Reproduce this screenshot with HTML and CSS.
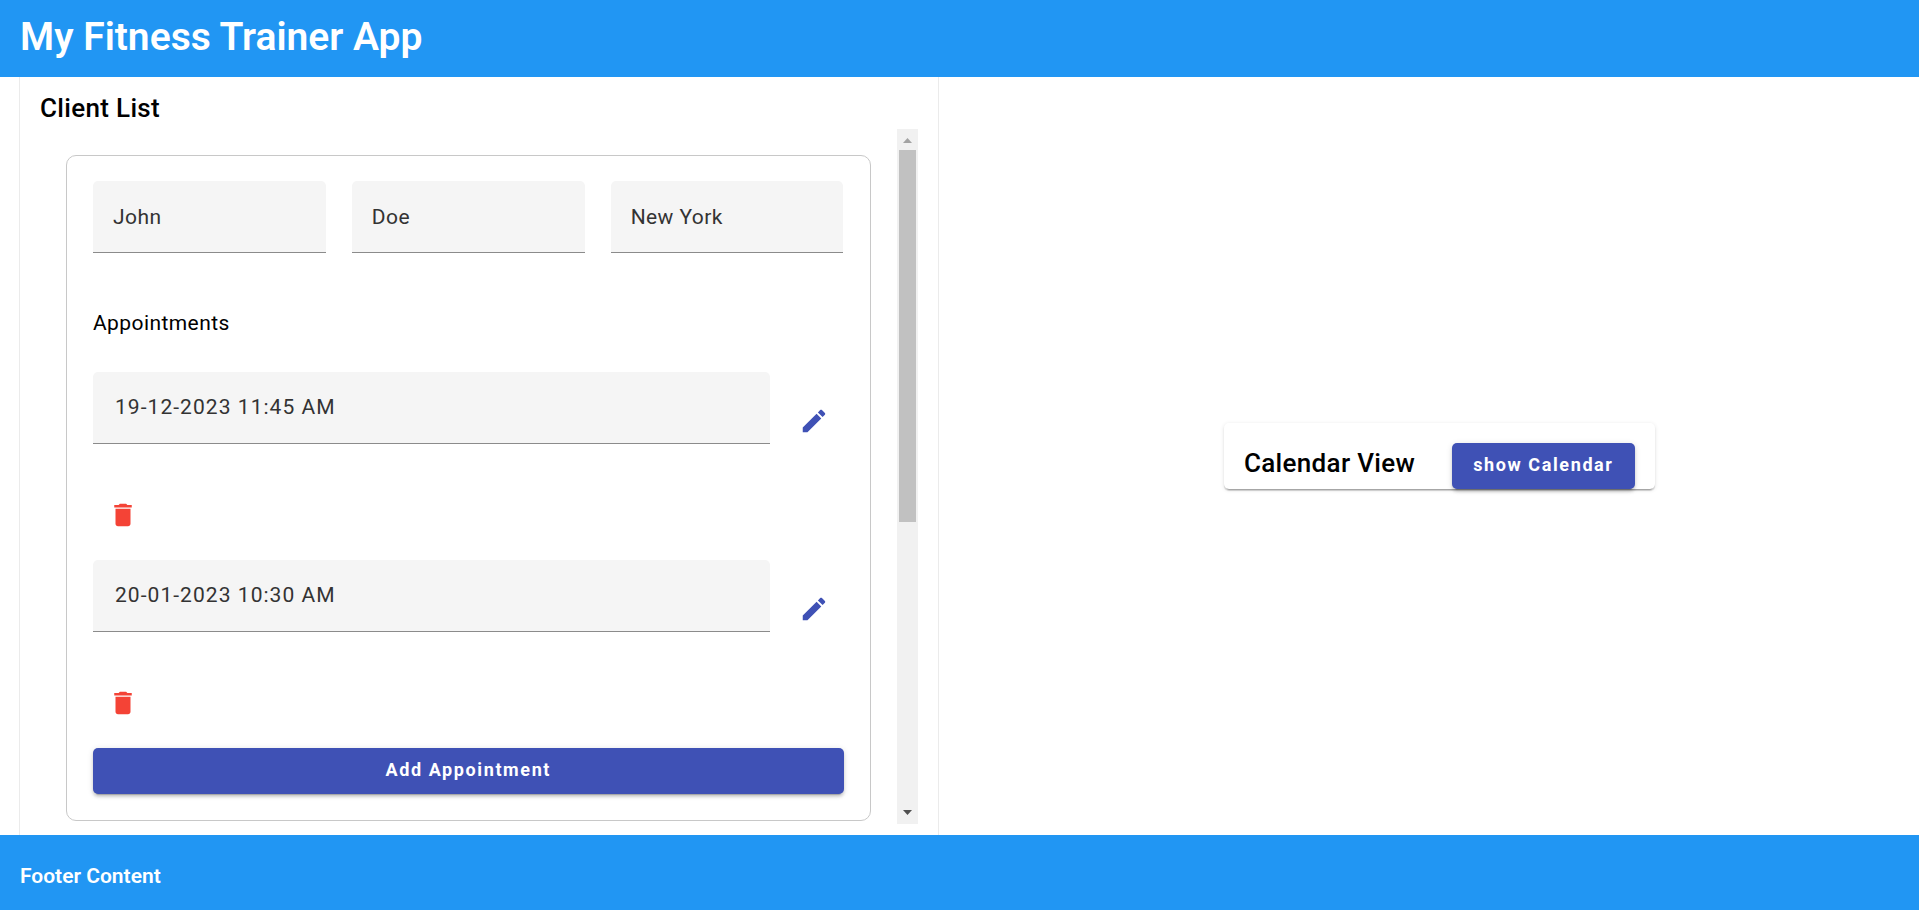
FILE: index.html
```html
<!DOCTYPE html>
<html lang="en">
<head>
<meta charset="utf-8">
<title>My Fitness Trainer App</title>
<link rel="stylesheet" href="styles.css">
</head>
<body>
<svg class="sprite" aria-hidden="true">
  <symbol id="edit" viewBox="0 0 24 24"><path d="M3 17.25V21h3.75L17.81 9.94l-3.75-3.75L3 17.25zM20.71 7.04c.39-.39.39-1.02 0-1.41l-2.34-2.34c-.39-.39-1.02-.39-1.41 0l-1.83 1.83 3.75 3.75 1.83-1.83z"/></symbol>
  <symbol id="delete" viewBox="0 0 24 24"><path d="M6 19c0 1.1.9 2 2 2h8c1.1 0 2-.9 2-2V7H6v12zM19 4h-3.500l-1-1h-5l-1 1H5v2h14V4z"/></symbol>
</svg>
<header class="app-header"><h1>My Fitness Trainer App</h1></header>
<main class="content">
  <section class="clients">
    <h2 class="card-title">Client List</h2>
    <div class="scroll">
      <div class="scroll-body">
        <form class="client">
          <div class="names">
            <input class="field" aria-label="First name" value="John">
            <input class="field" aria-label="Last name" value="Doe">
            <input class="field" aria-label="Location" value="New York">
          </div>
          <h3 class="subtitle">Appointments</h3>
          <div class="appointment">
            <input class="field" aria-label="Appointment 1" value="19-12-2023 11:45 AM">
            <button type="button" class="icon-button edit" aria-label="Edit"><svg><use href="#edit"/></svg></button>
            <button type="button" class="icon-button delete" aria-label="Delete"><svg><use href="#delete"/></svg></button>
          </div>
          <div class="appointment">
            <input class="field" aria-label="Appointment 2" value="20-01-2023 10:30 AM">
            <button type="button" class="icon-button edit" aria-label="Edit"><svg><use href="#edit"/></svg></button>
            <button type="button" class="icon-button delete" aria-label="Delete"><svg><use href="#delete"/></svg></button>
          </div>
          <button type="button" class="button">Add Appointment</button>
        </form>
      </div>
      <div class="scrollbar" aria-hidden="true">
        <svg class="arrow up" viewBox="0 0 9 5"><path d="M0 5L4.500 0L9 5z"/></svg>
        <div class="track"><div class="thumb"></div></div>
        <svg class="arrow down" viewBox="0 0 9 5"><path d="M0 0L4.500 5L9 0z"/></svg>
      </div>
    </div>
  </section>
  <section class="calendar">
    <div class="calendar-card">
      <h2 class="card-title">Calendar View</h2>
      <button type="button" class="button">show Calendar</button>
    </div>
  </section>
</main>
<footer class="app-footer">Footer Content</footer>
</body>
</html>
```
FILE: styles.css
```css
* { box-sizing: border-box; }
body {
  margin: 0;
  min-height: 100vh;
  display: flex;
  flex-direction: column;
  font-family: Roboto, "Liberation Sans", sans-serif;
  font-size: 21px;
  color: #000;
  background: #fff;
}
h1, h2, h3 { margin: 0; }
.sprite { display: none; }
.app-header {
  background: #2196f3;
  color: #fff;
  padding: 13px 20px 16px;
}
.app-header h1 { font-size: 39px; line-height: 48px; font-weight: 600; }
.content { flex: 1; display: grid; grid-template-columns: 1fr 1fr; }
.clients {
  min-width: 0;
  margin: 0 21px 0 19px;
  padding: 11px 20px;
  border: solid #ebebeb;
  border-width: 0 1px;
  display: flex;
  flex-direction: column;
}
.card-title {
  padding-bottom: 1px;
  font-size: 26px;
  line-height: 40px;
  font-weight: 500;
  letter-spacing: 0.0125em;
}
.scroll { flex: 1; display: flex; }
.scroll-body { flex: 1; min-width: 0; padding: 26px 26px 3px; }
.client {
  border: 1px solid #c8c8c8;
  border-radius: 10px;
  padding: 25px 26px 26px;
}
.names {
  display: grid;
  grid-template-columns: repeat(3, 1fr);
  gap: 26px;
}
.field {
  width: 100%;
  min-width: 0;
  height: 72px;
  padding: 0 20px;
  border: 0;
  border-bottom: 1px solid #8b8b8b;
  border-radius: 5px 5px 0 0;
  background: #f5f5f5;
  color: #333;
  font: inherit;
  letter-spacing: 0.02em;
}
.subtitle {
  margin: 58px 0 36px;
  font-size: 21px;
  line-height: 25px;
  font-weight: 400;
  letter-spacing: 0.02em;
}
.appointment {
  display: grid;
  grid-template-columns: 1fr 60px;
  gap: 16px 14px;
  padding-bottom: 15px;
}
.appointment .field {
  margin-bottom: 25px;
  padding: 0 22px 2px;
  letter-spacing: 0.05em;
}
.icon-button {
  width: 60px;
  height: 60px;
  padding: 15px;
  border: 0;
  background: none;
  align-self: center;
}
.icon-button svg { display: block; width: 30px; height: 30px; fill: currentColor; }
.edit { color: #3f51b5; }
.delete { color: #f44336; }
.button {
  height: 46px;
  padding: 0 21px 3px;
  border: 0;
  border-radius: 5px;
  background: #3f51b5;
  color: #fff;
  font: 700 18px Roboto, "Liberation Sans", sans-serif;
  letter-spacing: 0.0892857143em;
  box-shadow: 0 4px 1px -3px rgba(0,0,0,.2), 0 3px 3px rgba(0,0,0,.14), 0 1px 6px rgba(0,0,0,.12);
}
.client .button { display: block; width: 100%; }
.scrollbar {
  width: 21px;
  background: #f1f1f1;
  display: flex;
  flex-direction: column;
  align-items: center;
}
.arrow { width: 9px; height: 5px; }
.up { fill: #a3a3a3; margin: 9px 0 7px; }
.down { fill: #505050; margin: 7px 0 9px; }
.track { flex: 1; width: 17px; }
.thumb { height: 57%; background: #c1c1c1; }
.calendar { display: flex; align-items: center; justify-content: center; }
.calendar-card {
  display: flex;
  gap: 37px;
  padding: 20px 20px 0;
  border-radius: 5px;
  box-shadow: 0 4px 1px -3px rgba(0,0,0,.2), 0 2px 1px rgba(0,0,0,.14), 0 1px 4px rgba(0,0,0,.12);
}
.app-footer {
  background: #2196f3;
  color: #fff;
  padding: 29px 20px 21px;
  line-height: 25px;
  font-weight: 600;
}
```
